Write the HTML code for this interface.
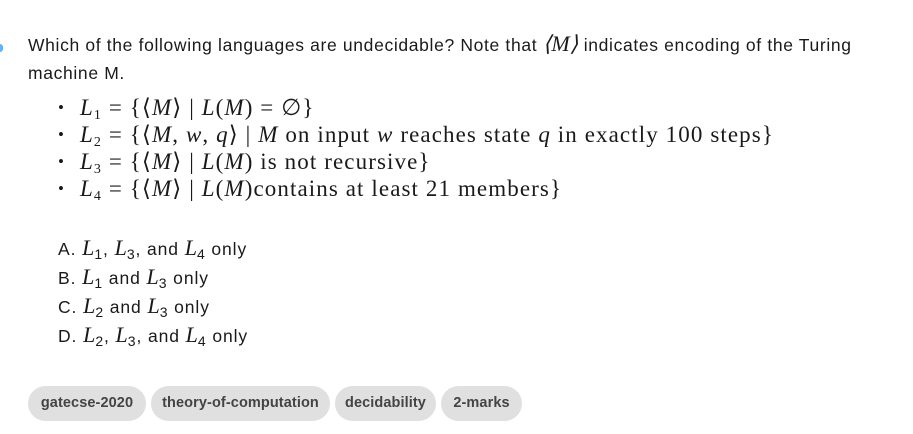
<!DOCTYPE html>
<html><head><meta charset="utf-8"><style>
body{margin:0;width:913px;height:434px;background:#fff;position:relative;font-family:"Liberation Sans",sans-serif;color:#1a1a1a;overflow:hidden}
.p{position:absolute;left:28px;top:30px;font-size:17.5px;letter-spacing:0.65px;line-height:28px;white-space:nowrap}
i{font-family:"Liberation Serif",serif;font-size:22px;letter-spacing:0}
sub{font-size:14px;vertical-align:-4px;line-height:0}
ul{position:absolute;left:58px;top:94px;margin:0;padding:0;list-style:none;font-family:"Liberation Serif",serif;font-size:23px;line-height:27px;letter-spacing:1.1px;white-space:nowrap}
ul li:before{content:"•";position:absolute;left:0;font-size:17px}
ul li{padding-left:22px}
ul i{font-size:23px;letter-spacing:1.1px}
.o{position:absolute;left:58px;top:234px;font-size:17.5px;letter-spacing:0.9px;line-height:28px;white-space:nowrap}
.c{position:absolute;top:386px;height:35px;line-height:35px;background:#e0e0e0;border-radius:18px;color:#444;font-weight:bold;font-size:14.5px;text-align:center;letter-spacing:0.1px}
</style></head><body>
<div style="position:absolute;left:0;top:44px;width:3px;height:8px;background:#6ab0f0;border-radius:0 3px 3px 0"></div>
<div class="p">Which of the following languages are undecidable? Note that <i>⟨M⟩</i> indicates encoding of the Turing<br>machine M.</div>
<ul>
<li><i>L</i><sub>1</sub> = {⟨<i>M</i>⟩ | <i>L</i>(<i>M</i>) = ∅}</li>
<li><i>L</i><sub>2</sub> = {⟨<i>M</i>, <i>w</i>, <i>q</i>⟩ | <i>M</i> on input <i>w</i> reaches state <i>q</i> in exactly 100 steps}</li>
<li><i>L</i><sub>3</sub> = {⟨<i>M</i>⟩ | <i>L</i>(<i>M</i>) is not recursive}</li>
<li><i>L</i><sub>4</sub> = {⟨<i>M</i>⟩ | <i>L</i>(<i>M</i>)contains at least 21 members}</li>
</ul>
<div class="o">
A. <i>L</i><sub>1</sub>, <i>L</i><sub>3</sub>, and <i>L</i><sub>4</sub> only<br>
B. <i>L</i><sub>1</sub> and <i>L</i><sub>3</sub> only<br>
C. <i>L</i><sub>2</sub> and <i>L</i><sub>3</sub> only<br>
D. <i>L</i><sub>2</sub>, <i>L</i><sub>3</sub>, and <i>L</i><sub>4</sub> only
</div>
<div class="c" style="left:28px;width:118px">gatecse-2020</div>
<div class="c" style="left:151px;width:179px">theory-of-computation</div>
<div class="c" style="left:335px;width:101px">decidability</div>
<div class="c" style="left:441px;width:81px">2-marks</div>
</body></html>
